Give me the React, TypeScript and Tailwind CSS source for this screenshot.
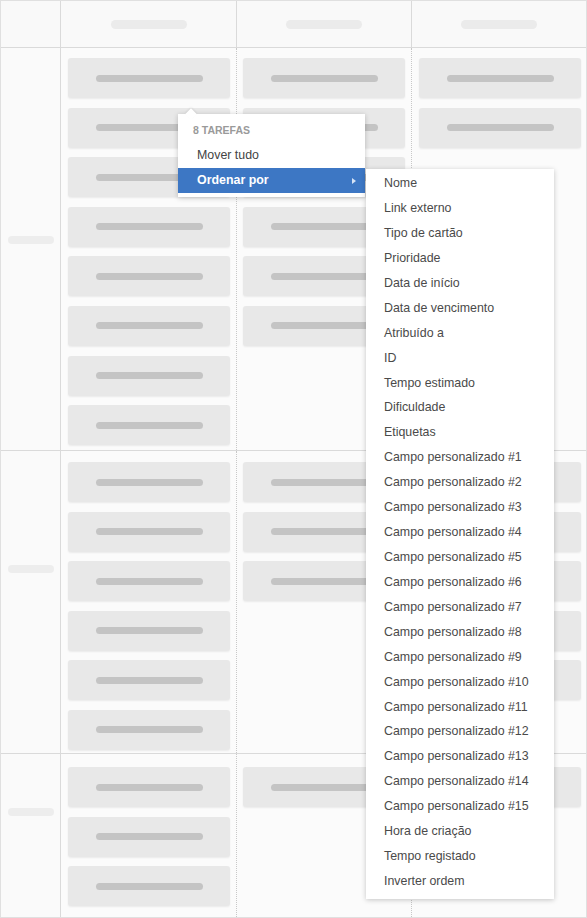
import React from 'react';

// Skeleton board: swimlane rows x status columns, with a sort menu open
const lanes = [
  { height: 'h-[403px]', pt: 'pt-[10px]', labelTop: 'pt-[188px]', counts: [8, 6, 2] },
  { height: 'h-[303px]', pt: 'pt-[11px]', labelTop: 'pt-[114px]', counts: [6, 3, 5] },
  { height: 'h-[163px]', pt: 'pt-[13px]', labelTop: 'pt-[54px]', counts: [3, 1, 1] },
];

const sortOptions = [
  'Nome',
  'Link externo',
  'Tipo de cartão',
  'Prioridade',
  'Data de início',
  'Data de vencimento',
  'Atribuído a',
  'ID',
  'Tempo estimado',
  'Dificuldade',
  'Etiquetas',
  ...Array.from({ length: 15 }, (_, i) => `Campo personalizado #${i + 1}`),
  'Hora de criação',
  'Tempo registado',
  'Inverter ordem',
];

const colPad = ['pl-[7px]', 'pl-[6px]', 'pl-[7px]'];

const SkeletonCard: React.FC = () => (
  <div className="w-[162px] h-[40px] shrink-0 rounded-[3px] bg-[#e8e8e8] shadow-[0_1px_2px_rgba(0,0,0,0.07)] flex items-center justify-center">
    <div className="w-[107px] h-[7px] rounded-full bg-[#c4c4c4]" />
  </div>
);

export default function App() {
  return (
    <div className="relative w-[587px] h-[918px] overflow-hidden border border-[#e0e0e0] bg-[#fbfbfb] font-['Liberation_Sans',Arial,sans-serif]">
      {/* header */}
      <div className="grid grid-cols-[60px_176px_175px_1fr] h-[47px] border-b border-[#dadada] bg-[#f9f9f9]">
        <div className="border-r border-[#dadada]" />
        {[0, 1, 2].map((i) => (
          <div
            key={i}
            className={`flex items-center justify-center ${i < 2 ? 'border-r border-[#dadada]' : ''}`}
          >
            <div className="w-[76px] h-[9px] rounded-full bg-[#ebebeb]" />
          </div>
        ))}
      </div>

      {/* lanes */}
      {lanes.map((lane, li) => (
        <div
          key={li}
          className={`grid grid-cols-[60px_176px_175px_1fr] ${lane.height} ${li < 2 ? 'border-b border-[#dadada]' : ''}`}
        >
          <div className={`border-r border-[#dadada] bg-[#fafafa] pl-[7px] ${lane.labelTop}`}>
            <div className="w-[46px] h-[8px] rounded-full bg-[#ededed]" />
          </div>
          {lane.counts.map((n, ci) => (
            <div
              key={ci}
              className={`flex flex-col gap-[9.6px] ${lane.pt} ${colPad[ci]} ${ci < 2 ? 'border-r border-dotted border-[#c8c8c8]' : ''}`}
            >
              {Array.from({ length: n }, (_, k) => (
                <SkeletonCard key={k} />
              ))}
            </div>
          ))}
        </div>
      ))}

      {/* column context menu */}
      <div className="absolute left-[177px] top-[113px] w-[187px] py-[4px] bg-white shadow-[0_1px_5px_rgba(0,0,0,0.22)]">
        <div className="absolute left-[9px] -top-[4px] w-[8px] h-[8px] rotate-45 bg-white shadow-[-1px_-1px_2px_rgba(0,0,0,0.08)]" />
        <div className="relative h-[25px] flex items-center pl-[15px] text-[10.5px] font-bold text-[#9a9a9a]">
          8 TAREFAS
        </div>
        <div className="h-[25px] flex items-center pl-[19px] text-[12.4px] text-[#444]">Mover tudo</div>
        <div className="h-[25px] flex items-center justify-between pl-[19px] pr-[9px] bg-[#3d77c4] text-[12.4px] font-bold text-white">
          <span>Ordenar por</span>
          <span className="w-0 h-0 border-y-[3.5px] border-y-transparent border-l-[4px] border-l-[#d6e3f5]" />
        </div>
      </div>

      {/* sort submenu */}
      <div className="absolute left-[365px] top-[168px] w-[188px] pt-[2px] pb-[5px] bg-white shadow-[0_1px_5px_rgba(0,0,0,0.22)]">
        {sortOptions.map((label) => (
          <div key={label} className="h-[24.93px] flex items-center pl-[18px] text-[12.4px] text-[#4a4a4a]">
            {label}
          </div>
        ))}
      </div>
    </div>
  );
}
